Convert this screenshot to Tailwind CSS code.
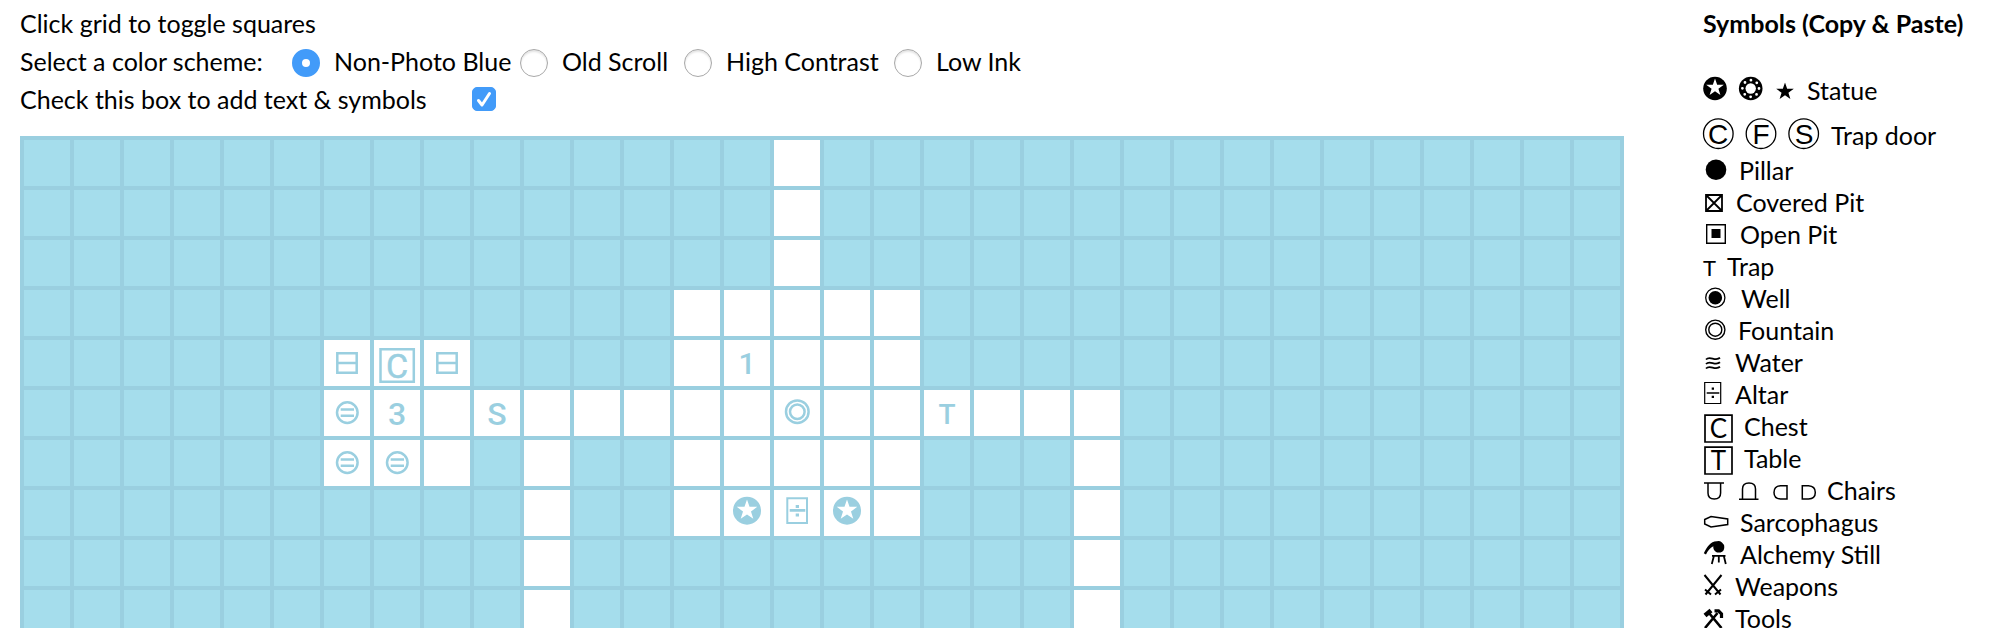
<!DOCTYPE html>
<html lang="en">
<head>
<meta charset="utf-8">
<meta name="viewport" content="width=device-width, initial-scale=1">
<title>Dungeon Map Grid</title>
<script src="https://cdn.jsdelivr.net/npm/@tailwindcss/browser@4"></script>
</head>
<body class="h-screen overflow-hidden bg-white font-['Lato',sans-serif] text-[25px] leading-8 text-black">
<svg class="hidden">
  <symbol id="star" viewBox="0 0 20 20"><path d="M10 0 12.4 7H19.8L13.8 11.400 16 18.400 10 14.200 4 18.400 6.200 11.400 .2 7H7.600Z"/></symbol>
</svg>
<div class="flex items-start gap-[79px] px-5 pt-[7px]">
  <main class="flex min-w-0 flex-1 flex-col">
    <form class="flex flex-col gap-[6px]">
      <p>Click grid to toggle squares</p>
      <div role="radiogroup" aria-labelledby="scheme-label" class="flex h-8 items-end">
        <span id="scheme-label" class="min-w-[272px]">Select a color scheme:</span>
        <label class="flex min-w-[228px] items-end gap-[14px]"><input type="radio" name="scheme" checked class="size-7 shrink-0 appearance-none rounded-full border border-[#a8a8a8] bg-white shadow-[inset_0_2px_2px_#e4e4e4] checked:border-[10px] checked:border-[#429bf9] checked:shadow-none">Non-Photo Blue</label>
        <label class="flex min-w-[164px] items-end gap-[14px]"><input type="radio" name="scheme" class="size-7 shrink-0 appearance-none rounded-full border border-[#a8a8a8] bg-white shadow-[inset_0_2px_2px_#e4e4e4] checked:border-[10px] checked:border-[#429bf9] checked:shadow-none">Old Scroll</label>
        <label class="flex min-w-[210px] items-end gap-[14px]"><input type="radio" name="scheme" class="size-7 shrink-0 appearance-none rounded-full border border-[#a8a8a8] bg-white shadow-[inset_0_2px_2px_#e4e4e4] checked:border-[10px] checked:border-[#429bf9] checked:shadow-none">High Contrast</label>
        <label class="flex items-end gap-[14px]"><input type="radio" name="scheme" class="size-7 shrink-0 appearance-none rounded-full border border-[#a8a8a8] bg-white shadow-[inset_0_2px_2px_#e4e4e4] checked:border-[10px] checked:border-[#429bf9] checked:shadow-none">Low Ink</label>
      </div>
      <div class="flex h-8 items-center">
        <label for="symbols" class="min-w-[452px]">Check this box to add text &amp; symbols</label>
        <span class="grid">
          <input id="symbols" type="checkbox" checked class="peer col-start-1 row-start-1 size-6 appearance-none rounded-[5px] border border-[#a8a8a8] bg-white checked:border-[#429bf9] checked:bg-[#429bf9]">
          <svg class="pointer-events-none invisible col-start-1 row-start-1 size-6 fill-none stroke-white stroke-[3] peer-checked:visible" viewBox="0 0 24 24" stroke-linecap="round" stroke-linejoin="round"><path d="M6.500 13.500 10 18 17.500 6.500"/></svg>
        </span>
      </div>
    </form>
    <div id="map" class="mt-[21px] grid grid-cols-[repeat(32,minmax(0,1fr))] gap-1 bg-[#9acfe0] p-1"></div>
  </main>

  <aside class="w-[267px] shrink-0 whitespace-nowrap">
    <h2 class="font-bold">Symbols (Copy &amp; Paste)</h2>
    <ul class="mt-[35px]">
      <li class="mb-[13px] flex h-8"><svg class="h-8 w-[104px] shrink-0" viewBox="0 0 104 32"><circle cx="12" cy="14.500" r="11.800"/><use href="#star" x="3" y="4.500" width="18" height="18" fill="#fff"/><circle cx="47.700" cy="14.500" r="11.800"/><circle cx="47.700" cy="14.500" r="8.300" fill="none" stroke="#fff" stroke-width="2.800" stroke-linecap="round" stroke-dasharray="0 6.519"/><circle cx="47.700" cy="14.500" r="5.200" fill="#fff"/><use href="#star" x="73" y="8.500" width="18" height="18"/></svg>Statue</li>
      <li class="mb-[3px] flex h-8"><svg class="h-8 w-[128px] shrink-0 overflow-visible" viewBox="0 0 128 32" text-anchor="middle" font-family="Liberation Sans" font-size="28"><g fill="none" stroke="#000" stroke-width="1.300"><circle cx="15.300" cy="14.700" r="14.800"/><circle cx="58" cy="14.700" r="14.800"/><circle cx="100.700" cy="14.700" r="14.800"/></g><text x="15" y="25">C</text><text x="58" y="25">F</text><text x="101" y="25">S</text></svg>Trap door</li>
      <li class="flex h-8"><svg class="h-8 w-9 shrink-0" viewBox="0 0 36 32"><circle cx="13" cy="15.700" r="10.300"/></svg>Pillar</li>
      <li class="flex h-8"><svg class="h-8 w-[33px] shrink-0" viewBox="0 0 33 32" fill="none" stroke="#000" stroke-width="1.800"><path d="M3 9H19V25H3ZL19 25M19 9 3 25"/></svg>Covered Pit</li>
      <li class="flex h-8"><svg class="h-8 w-[37px] shrink-0" viewBox="0 0 37 32"><path fill="none" stroke="#000" stroke-width="1.400" d="M3.700 6.700H22.300V25.300H3.700Z"/><path d="M8.500 11H17.500V20H8.500Z"/></svg>Open Pit</li>
      <li class="flex h-8 items-baseline"><span class="w-6 text-[22px]">T</span>Trap</li>
      <li class="flex h-8"><svg class="h-8 w-[38px] shrink-0" viewBox="0 0 38 32"><circle cx="12.300" cy="15.700" r="9.600" fill="none" stroke="#000" stroke-width="1.300"/><circle cx="12.300" cy="15.700" r="6.800"/></svg>Well</li>
      <li class="flex h-8"><svg class="h-8 w-[35px] shrink-0" viewBox="0 0 35 32" fill="none" stroke="#000" stroke-width="1.400"><circle cx="12.300" cy="15.700" r="9.600"/><circle cx="12.300" cy="15.700" r="6.500"/></svg>Fountain</li>
      <li class="flex h-8"><svg class="h-8 w-8 shrink-0" viewBox="0 0 32 32" fill="none" stroke="#000" stroke-width="1.800"><path d="M3 13.500C7 9 12 16 17 11.800M3 18C7 13.500 12 20.500 17 16.300M3 22.500C7 18 12 25 17 20.800"/></svg>Water</li>
      <li class="flex h-8"><svg class="h-8 w-8 shrink-0" viewBox="0 0 32 32"><path fill="none" stroke="#000" stroke-width="1.200" d="M1.700 4.500H17.700V25.500H1.700Z"/><path d="M3.700 14.200H16.300V15.700H3.700ZM8.700 9.500H11V11.800H8.700ZM8.700 17.800H11V20.100H8.700Z"/></svg>Altar</li>
      <li class="flex h-8"><svg class="h-8 w-[41px] shrink-0 overflow-visible" viewBox="0 0 41 32" text-anchor="middle" font-size="26"><path fill="none" stroke="#000" stroke-width="1.700" d="M2 5.200H29V32H2Z"/><text x="15.500" y="28">C</text></svg>Chest</li>
      <li class="flex h-8"><svg class="h-8 w-[41px] shrink-0 overflow-visible" viewBox="0 0 41 32" text-anchor="middle" font-size="26"><path fill="none" stroke="#000" stroke-width="1.700" d="M2 5.200H29V32H2Z"/><text x="15.500" y="28">T</text></svg>Table</li>
      <li class="flex h-8"><svg class="h-8 w-[124px] shrink-0" viewBox="0 0 124 32" fill="none" stroke="#000" stroke-width="1.500"><path d="M1 9H21M5 9V19Q5 25 11.300 25T17.600 19V9M36 25.300H55.500M39.500 25V15Q39.500 9 46 9T52.500 15V25M84 11.800V25H77.500Q71 24.500 71 18.400T77.500 11.800ZM99.300 11.800V25H105.500Q112.300 24.500 112.300 18.400T105.500 11.800Z"/></svg>Chairs</li>
      <li class="flex h-8"><svg class="h-8 w-[37px] shrink-0" viewBox="0 0 37 32" fill="none" stroke="#000" stroke-width="1.500"><path d="M1.700 13.500 8 10.500 24.700 13V18.500L8 21 1.700 18Z"/></svg>Sarcophagus</li>
      <li class="flex h-8"><svg class="h-8 w-[37px] shrink-0" viewBox="0 0 37 32"><path d="M.8 15.200C4 9 7.500 3 14 3.200A6.200 6.200 0 0 1 21.300 9C21.300 12 20 14 17.500 14.500H14C11 13 10 10.500 10.300 8.200 7 10 4.500 13 3 16.400Z"/><path fill="none" stroke="#000" stroke-width="1.800" d="M9 17.800H22.500M11 17.500 8.800 26M15.800 17.500V24.500M20.700 17.500 22.800 26"/></svg>Alchemy Still</li>
      <li class="flex h-8"><svg class="h-8 w-8 shrink-0" viewBox="0 0 32 32" fill="none" stroke="#000" stroke-width="2"><path d="M1.500 5 17.500 24.500M18.500 5 2.500 24.500M2 19.500 8 24.500M12 24.500 18 19.500"/></svg>Weapons</li>
      <li class="flex h-8"><svg class="h-8 w-8 shrink-0" viewBox="0 0 32 32" fill="none" stroke="#000"><path stroke-width="2.600" d="M6 11 18.500 26M14.500 11 2 26"/><path stroke-width="4.500" d="M2 13.500 8 8.500"/><path stroke-width="3.200" d="M11.500 8.800H15.500L18.500 12V16"/></svg>Tools</li>
    </ul>
  </aside>
</div>
<script>
// Open squares, by row: [first column, last column] runs.
const open = [
  [[15,15]], [[15,15]], [[15,15]], [[13,17]], [[6,8],[13,17]], [[6,21]],
  [[6,8],[10,10],[13,17],[21,21]], [[10,10],[13,17],[21,21]], [[10,10],[21,21]], [[10,10],[21,21]]
];
const svg = inner => `<svg class="size-full" viewBox="0 0 46 46" fill="none" stroke="#9acfe0" stroke-width="2.500">${inner}</svg>`;
const letter = (t, size, y) => svg(`<text x="23" y="${y}" text-anchor="middle" font-family="Roboto" font-weight="500" font-size="${size}" fill="#9acfe0" stroke="none">${t}</text>`);
const bench = svg('<path d="M13.300 13.300H32.700V32.700H13.300ZM13 23H33"/>');
const barrel = svg('<circle cx="23.300" cy="22.600" r="10.300"/><path d="M16.700 19.500H30M16.700 25.700H30"/>');
const statue = svg('<circle cx="23" cy="20.700" r="14" fill="#9acfe0" stroke="none"/><use href="#star" x="12.500" y="9.500" width="21" height="21" fill="#fff" stroke="none"/>');
const marks = {
  '4,6': bench, '4,8': bench, '5,6': barrel, '6,6': barrel, '6,7': barrel,
  '4,7': svg('<path d="M6.500 9.200H39.800V41.800H6.500Z"/><text x="23" y="37.500" text-anchor="middle" font-family="Roboto" font-size="34" fill="#9acfe0" stroke-width=".5">C</text>'),
  '4,14': letter('1', 30, 34), '5,7': letter('3', 32, 35), '5,9': letter('S', 32, 35), '5,18': letter('T', 28, 34),
  '5,15': svg('<circle cx="23.300" cy="21.700" r="11.300"/><circle cx="23.300" cy="21.700" r="7.300"/>'),
  '7,14': statue, '7,16': statue,
  '7,15': svg('<path stroke-width="2" d="M13.300 8.300H33V33H13.300Z"/><path fill="#9acfe0" stroke="none" d="M15.700 19H31.300V21.700H15.700ZM21.700 15H25V18H21.700ZM21.700 23.500H25V26.500H21.700Z"/>')
};
const map = document.getElementById('map');
for (let r = 0; r < 20; r++) for (let c = 0; c < 32; c++) {
  const b = document.createElement('button');
  b.type = 'button';
  b.className = 'aspect-square bg-[#a5ddec] aria-pressed:bg-white';
  b.setAttribute('aria-label', `Row ${r + 1}, column ${c + 1}`);
  b.setAttribute('aria-pressed', (open[r] || []).some(([a, z]) => c >= a && c <= z));
  b.innerHTML = marks[r + ',' + c] || '';
  b.onclick = () => b.setAttribute('aria-pressed', b.getAttribute('aria-pressed') !== 'true');
  map.append(b);
}
</script>
</body>
</html>
